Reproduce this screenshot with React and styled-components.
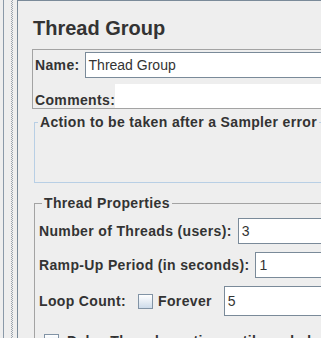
import React from "react";
import styled, { createGlobalStyle } from "styled-components";

const GlobalStyle = createGlobalStyle`
  html, body {
    margin: 0;
    padding: 0;
    background: #eeeeee;
  }
  body {
    font-family: "Liberation Sans", Arial, sans-serif;
    color: #333333;
  }
`;

const Screen = styled.div`
  display: flex;
  width: 321px;
  height: 338px;
  overflow: hidden;
  background: #eeeeee;
`;

const TreeEdge = styled.div`
  flex-shrink: 0;
  width: 3px;
  border-right: 1px solid #8a99a8;
`;

const SplitDivider = styled.div`
  flex-shrink: 0;
  width: 2px;
  margin: 0 4px 0 7px;
  background: conic-gradient(#9aa3ad 25%, transparent 0 50%, #9aa3ad 0 75%, transparent 0) 0 0 / 2px 2px;
`;

const Panel = styled.div`
  flex-shrink: 0;
  width: 620px;
  border-left: 1px solid #7a8a99;
  border-top: 1px solid #7a8a99;
  padding-left: 14px;
`;

const Title = styled.h1`
  margin: 15px 0 0 1px;
  font-size: 20px;
  line-height: 24px;
  font-weight: bold;
  color: #333333;
`;

const Label = styled.span`
  font-size: 14px;
  line-height: 16px;
  font-weight: bold;
  letter-spacing: 0.35px;
  white-space: nowrap;
  margin-left: ${(p) => p.$left || 0}px;
`;

const NameBox = styled.div`
  margin-top: 9px;
  border: 1px solid #a3a3a3;
  padding: 2px 0 0 2px;
`;

const Row = styled.div`
  display: flex;
  align-items: ${(p) => p.$align || "center"};
  gap: ${(p) => p.$gap || 0}px;
  margin-top: ${(p) => p.$top || 0}px;
`;

const TextField = styled.div`
  flex: 1;
  display: flex;
  align-items: center;
  box-sizing: border-box;
  height: ${(p) => p.$height || 26}px;
  margin-left: ${(p) => p.$left || 0}px;
  padding-left: 3px;
  background: #ffffff;
  border: 1px solid #7a8a99;
  font-size: 14px;
  color: #333333;
`;

const CommentsArea = styled.div`
  flex: 1;
  height: 24px;
  background: #ffffff;
`;

const Group = styled.fieldset`
  margin: ${(p) => p.$top}px 0 0 2px;
  padding: ${(p) => p.$padTop || 0}px 0 0 ${(p) => p.$padLeft || 0}px;
  min-width: 0;
  border: 1px solid ${(p) => p.$border};
  display: flex;
  flex-direction: column;
  gap: 8px;
`;

const GroupTitle = styled.legend`
  margin-left: 3px;
  padding: 0 2px;
  font-size: 14px;
  line-height: 16px;
  font-weight: bold;
  letter-spacing: 0.35px;
  white-space: nowrap;
  color: #333333;
`;

const GroupBody = styled.div`
  height: ${(p) => p.$height}px;
`;

const CheckBox = styled.span`
  flex-shrink: 0;
  display: inline-block;
  box-sizing: border-box;
  width: 15px;
  height: 15px;
  margin-left: ${(p) => p.$left || 0}px;
  border: 1px solid #8193a5;
  background: linear-gradient(#ffffff, #cddbea);
`;

export default function App() {
  return (
    <>
      <GlobalStyle />
      <Screen>
        <TreeEdge />
        <SplitDivider />
        <Panel>
          <Title>Thread Group</Title>
          <NameBox>
            <Row $gap={5}>
              <Label>Name:</Label>
              <TextField>Thread Group</TextField>
            </Row>
            <Row $top={6} $align="flex-end">
              <Label>Comments:</Label>
              <CommentsArea />
            </Row>
          </NameBox>

          <Group $top={5} $border="#b8cfe5">
            <GroupTitle>Action to be taken after a Sampler error</GroupTitle>
            <GroupBody $height={52} />
          </Group>

          <Group $top={12} $padTop={7} $padLeft={4} $border="#a3a3a3">
            <GroupTitle>Thread Properties</GroupTitle>
            <Row $gap={6}>
              <Label>Number of Threads (users):</Label>
              <TextField>3</TextField>
            </Row>
            <Row $gap={6}>
              <Label>Ramp-Up Period (in seconds):</Label>
              <TextField>1</TextField>
            </Row>
            <Row>
              <Label>Loop Count:</Label>
              <CheckBox $left={12} />
              <Label $left={5}>Forever</Label>
              <TextField $left={12} $height={30}>5</TextField>
            </Row>
            <Row $top={9}>
              <CheckBox $left={5} />
              <Label $left={8}>Delay Thread creation until needed</Label>
            </Row>
          </Group>
        </Panel>
      </Screen>
    </>
  );
}
